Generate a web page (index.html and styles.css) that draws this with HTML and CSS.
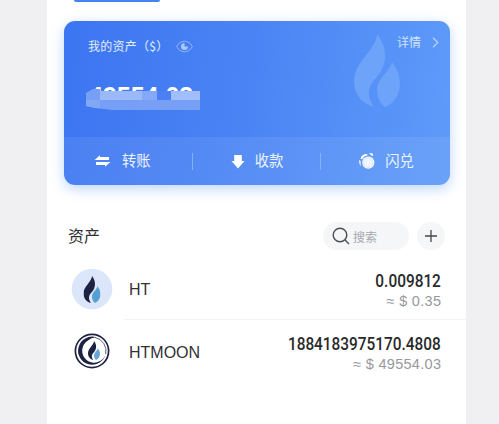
FILE: index.html
```html
<!DOCTYPE html>
<html lang="zh-CN">
<head>
<meta charset="utf-8">
<title>我的资产</title>
<link rel="stylesheet" href="styles.css">
</head>
<body>
<svg width="0" height="0" class="defs">
  <symbol id="flame-back" viewBox="0 0 46 73"><path d="M23 0C23 15 0 28 0 47C0 60 8 70 20 73C12 61 14 52 22 44C34 31 34 14 23 0Z"/></symbol>
  <symbol id="flame-front" viewBox="0 0 46 73"><path d="M38 28C35 39 23 44 23 57C23 64 27 70 31 73C40 70 46 60 46 49C46 40 42 34 38 28Z"/></symbol>
</svg>
<main class="page">
  <div class="tab"></div>
  <section class="card">
    <div class="summary">
      <div class="card-head">
        <span class="label">我的资产（$）</span>
        <svg class="eye" viewBox="0 0 17 13" fill="none" stroke="#94b8f9"><path d="M.7 6.5C4-.5 13-.5 16.3 6.5C13 13.5 4 13.5.7 6.5Z"/><path d="M8.5 3V6.5H12A3.5 3.5 0 1 1 8.5 3Z" fill="#a9c7fb" stroke="none"/></svg>
        <span class="detail">详情</span>
        <svg class="chevron" viewBox="0 0 7 11" fill="none" stroke="#b8d2fd" stroke-width="1.3"><path d="M1 .7L5.8 5.5L1 10.3"/></svg>
      </div>
      <div class="amount"><span class="amount-text">49554.03</span>
        <svg class="mosaic" viewBox="0 0 116 26"><path d="M1 7L8 3H15V5H72V7H86V5H115V24H27L10 22L1 20Z" fill="#779ff5"/><path d="M15 5H57V14H15Z" fill="#9ab9f8"/><path d="M57 5H72V14H57Z" fill="#84aaf7"/><path d="M86 5H115V14H86Z" fill="#a0bef9"/><path d="M72 5H86V14H72Z" fill="#4a80f3"/><path d="M1 14H15V22H10L1 20Z" fill="#82a7f7"/></svg>
      </div>
      <svg class="watermark" viewBox="0 0 46 73" fill="#6da3f8"><use href="#flame-back"/><use href="#flame-front"/></svg>
    </div>
    <div class="actions">
      <div class="action"><svg class="icon transfer" viewBox="0 0 17 14" fill="#fff"><path d="M.5 6L6 1.3V3H15V6H.5ZM16.5 8L11 12.7V11H2V8Z"/></svg><span>转账</span></div>
      <div class="action"><svg class="icon receive" viewBox="0 0 14 15" fill="#fff"><path d="M3.2 1H10.8V7H13.5L7 14.5L.5 7H3.2Z"/></svg><span>收款</span></div>
      <div class="action"><svg class="icon flash" viewBox="0 0 18 18"><g fill="#fff"><path d="M2.5 6.5Q4 1.8 8.5 2L10 3.2Q5.5 4 4 7.5Z"/><path d="M1.2 8L2.6 9V13L3.6 14.4Q.8 13 1.2 8Z"/><path d="M11 1L14.8 1.4V4.6L12.8 3Z"/></g><circle cx="10.3" cy="10.6" r="6.1" fill="#fff"/><circle cx="10.3" cy="10.6" r="4.8" fill="#f0f5ff" stroke="#c3d7fd" stroke-width=".6"/></svg><span>闪兑</span></div>
    </div>
  </section>
  <header class="assets-head">
    <h2>资产</h2>
    <div class="search"><svg class="glass" viewBox="0 0 18 18" fill="none" stroke="#4b4e54" stroke-width="1.4"><circle cx="8" cy="8" r="6.8"/><path d="M12.8 12.8L17 17"/></svg><span>搜索</span></div>
    <div class="add"><svg viewBox="0 0 12 12" stroke="#44474d" stroke-width="1.3"><path d="M6 0V12M0 6H12"/></svg></div>
  </header>
  <div class="asset">
    <svg class="coin" viewBox="0 0 42 42"><circle cx="21" cy="21" r="20.3" fill="#dce6fa"/><use href="#flame-back" x="12.5" y="8" width="17" height="27" fill="#1d2142"/><use href="#flame-front" x="12.5" y="8" width="17" height="27" fill="#559fd3"/></svg>
    <div class="asset-body"><span class="name">HT</span><div class="values"><b>0.009812</b><span>≈ $ 0.35</span></div></div>
  </div>
  <div class="asset second">
    <svg class="coin" viewBox="0 0 42 42"><circle cx="21" cy="21" r="16.6" fill="#fff" stroke="#1d2142" stroke-width="1.7"/><path d="M25 7.2A14 14 0 1 0 34.7 24A12 12 0 1 1 17 10.4Q20 7.5 25 7.2Z" fill="#1d2142"/><path d="M24 7.4A14 14 0 0 1 34.7 24" fill="none" stroke="#1d2142" stroke-width=".7"/><use href="#flame-back" x="17" y="11" width="12" height="19" fill="#1d2142"/><use href="#flame-front" x="17" y="11" width="12" height="19" fill="#66a6d8"/></svg>
    <div class="asset-body"><span class="name moon">HTMOON</span><div class="values"><b>1884183975170.4808</b><span>≈ $ 49554.03</span></div></div>
  </div>
</main>
</body>
</html>
```
FILE: styles.css
```css
* { box-sizing: border-box; }
body {
  margin: 0;
  height: 424px;
  overflow: hidden;
  background: #f0f0f2;
  font-family: "Liberation Sans", "Noto Sans CJK SC", sans-serif;
  color: #303133;
}
svg { display: block; flex: none; }
.defs { position: absolute; }
.page { width: 419px; height: 424px; margin-left: 47px; background: #fff; overflow: hidden; }
.tab { width: 86px; height: 2px; margin-left: 27px; background: #4385ee; border-radius: 0 0 6px 6px; }
.card {
  width: 386px;
  height: 164px;
  margin: 19px 0 0 17px;
  border-radius: 11px;
  background: linear-gradient(97deg, #3c75f1 0%, #4882f4 42%, #5e9bf9 100%);
  box-shadow: 0 4px 13px rgba(77, 144, 250, .36);
  overflow: hidden;
  display: flex;
  flex-direction: column;
}
.summary { height: 116px; position: relative; }
.card-head { display: flex; align-items: center; padding: 12px 11px 0 24px; height: 39px; }
.label { font: 12px/18px "Noto Sans CJK SC", sans-serif; letter-spacing: .25px; color: #e5eeff; width: 88px; margin-top: -1px; white-space: nowrap; }
.eye { width: 17px; height: 13px; }
.detail { margin: -8px 11px 0 auto; font-size: 12px; line-height: 18px; color: #d2e3ff; }
.chevron { width: 7px; height: 11px; margin-top: -8px; }
.amount { position: relative; display: flex; margin: 22px 0 0 25px; width: 116px; height: 30px; }
.amount-text { margin-top: -1px; font: bold 25px/30px "Liberation Sans", sans-serif; color: #fff; }
.mosaic { position: absolute; left: -4px; top: 4px; width: 116px; height: 26px; }
.watermark { position: absolute; left: 290px; top: 13px; width: 46px; height: 73px; }
.actions { flex: 1; display: flex; background: rgba(255, 255, 255, .075); }
.action { position: relative; width: 129px; display: flex; align-items: center; padding: 0 0 0 30px; font-size: 14.3px; line-height: 20px; color: #edf4ff; }
.action + .action { padding-left: 38px; }
.action + .action::before { content: ""; position: absolute; left: -1px; top: 16px; height: 17px; width: 1px; background: #88b0fa; }
.transfer { width: 17px; height: 14px; margin-right: 11px; }
.receive { width: 14px; height: 15px; margin-right: 10px; }
.flash { width: 18px; height: 18px; margin-right: 9px; margin-left: -1px; }
.assets-head { display: flex; align-items: center; height: 28px; margin: 37px 21px 0 21px; }
h2 { margin: 2px 0 0; font-size: 16px; font-weight: 400; line-height: 24px; }
.search { margin-left: auto; width: 86px; height: 28px; border-radius: 14px; background: #f5f6f8; display: flex; align-items: center; padding-left: 9px; font-size: 12px; color: #a7a9ad; }
.glass { width: 18px; height: 18px; margin-right: 3px; }
.add { width: 28px; height: 28px; margin-left: 8px; border-radius: 50%; background: #f5f6f8; display: grid; place-items: center; }
.add svg { width: 12px; height: 12px; }
.asset { display: flex; height: 62px; margin: 8px 0 0 24px; }
.second { margin-top: 0; }
.coin { width: 42px; height: 42px; margin-top: 10px; }
.asset-body { flex: 1; display: flex; margin-left: 11px; padding: 0 25px 0 5px; border-bottom: 1px solid #f3f3f5; }
.second .asset-body { border: 0; }
.name { font-size: 16px; line-height: 24px; margin-top: 20px; }
.moon { margin-top: 21px; }
.values { margin-left: auto; display: flex; flex-direction: column; align-items: flex-end; padding-top: 12px; }
.values b { font: 500 19px/22px Roboto, sans-serif; color: #292a2c; transform: scaleX(.81); transform-origin: right; }
.values span { font-size: 14.5px; line-height: 18px; color: #97999d; letter-spacing: .3px; margin-right: -.3px; }
.second .values { padding-top: 13px; }
```
